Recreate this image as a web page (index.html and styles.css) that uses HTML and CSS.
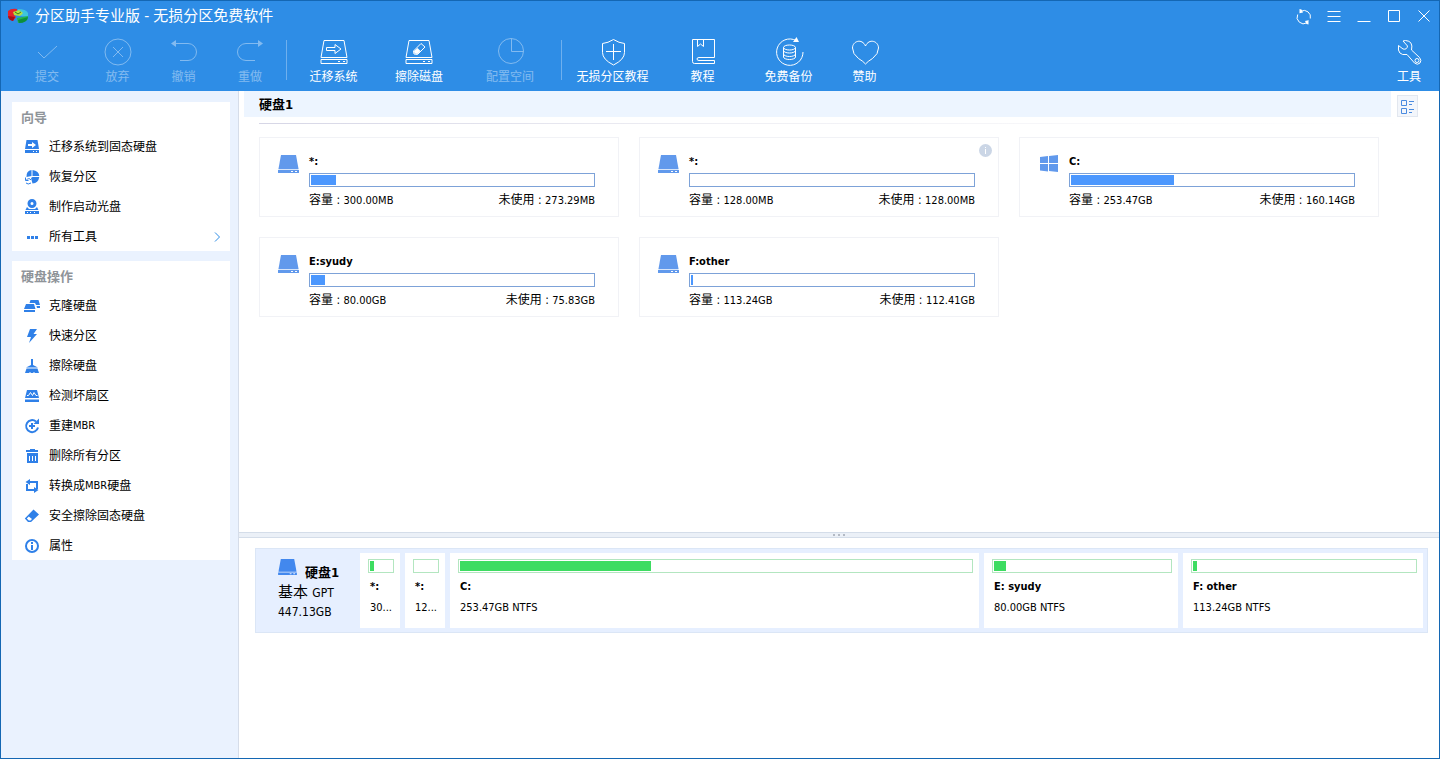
FILE: index.html
```html
<!DOCTYPE html>
<html lang="zh-CN">
<head>
<meta charset="utf-8">
<title>分区助手专业版 - 无损分区免费软件</title>
<link rel="stylesheet" href="styles.css">
</head>
<body>
<svg class="defs" aria-hidden="true">
  <symbol id="drive" viewBox="0 0 21 19">
    <path d="M3 0h15l2.600 14.200H.4z"/><path fill-rule="evenodd" d="M0 15h21v3H0zM13 16v1h2v-1zM17 16v1h2v-1z"/>
  </symbol>
</svg>
<div class="window">
  <header class="top">
    <div class="titlebar">
      <svg class="logo" width="22" height="18" viewBox="0 0 22 18">
        <path d="M1 4q3-3 9-2v4l-3 2 2 2-3 4Q0 13 1 4z" fill="#e4232b"/>
        <path d="M1 9l7 1-2 4Q1 13 1 9z" fill="#a90d18"/>
        <path d="M11 2q8 0 10 4v4l-7-1-3-4z" fill="#3fc4dc"/>
        <path d="M10 11l11-2q1 6-10 7z" fill="#21b64c"/>
        <path d="M11 13l10-3q-1 6-9 6z" fill="#0c8f3c"/>
        <path d="M6 5l6-2 4 3-3 3-6-1z" fill="#b8df3e"/><path d="M8 5l3 2 3-2" fill="none" stroke="#397b22"/>
      </svg>
      <h1 class="title">分区助手专业版 - 无损分区免费软件</h1>
      <div class="winbtns">
        <button class="winbtn" aria-label="刷新"><svg width="16" height="16" viewBox="0 0 16 16"><path d="M5 3.200A6.500 6.500 0 0 1 14.300 10.500M1.700 6.500A6.500 6.500 0 0 0 11 14.800"/><path class="solid" d="M3.500 1v4.500H2.500L7 4.500 5.500 1.500zM12.500 16.500V12H13.500L9 13l1.500 3z"/></svg></button>
        <button class="winbtn" aria-label="菜单"><svg width="16" height="16" viewBox="0 0 16 16"><path d="M1.500 3.500h13M1.500 8.500h13M1.500 13.500h13"/></svg></button>
        <button class="winbtn" aria-label="最小化"><svg width="16" height="16" viewBox="0 0 16 16"><path d="M1.500 13.500h13"/></svg></button>
        <button class="winbtn" aria-label="最大化"><svg width="16" height="16" viewBox="0 0 16 16"><path d="M2.500 2.500h11v11h-11z"/></svg></button>
        <button class="winbtn" aria-label="关闭"><svg width="16" height="16" viewBox="0 0 16 16"><path d="M2.500 2.500l11 11M13.500 2.500l-11 11"/></svg></button>
      </div>
    </div>
    <nav class="toolbar">
      <div class="group group-edit">
        <button class="tool" disabled><svg width="28" height="28" viewBox="0 0 28 28"><path d="M5 14l6 6L24 8"/></svg>提交</button>
        <button class="tool" disabled><svg width="28" height="28" viewBox="0 0 28 28"><circle cx="14" cy="14" r="13"/><path d="M9 9l10 10M19 9L9 19"/></svg>放弃</button>
        <button class="tool" disabled><svg width="28" height="28" viewBox="0 0 28 28"><path d="M4 5.500h14a8.500 8.500 0 0 1 0 17H10"/><path class="solid" d="M1 5.500l5-3.500v7z"/></svg>撤销</button>
        <button class="tool" disabled><svg width="28" height="28" viewBox="0 0 28 28"><path d="M24 5.500H10a8.500 8.500 0 0 0 0 17h9"/><path class="solid" d="M27 5.500L22 2v7z"/></svg>重做</button>
      </div>
      <div class="group group-disk">
        <button class="tool"><svg width="28" height="28" viewBox="0 0 28 28"><path d="M4 2.500h20l3 17H1zM1 21.500h26v4H1zM18 23.500h2M23 23.500h2M6.500 9.500h8.500V6.500l6 4.500-6 4.500v-3H6.500z"/></svg>迁移系统</button>
        <button class="tool"><svg width="28" height="28" viewBox="0 0 28 28"><path d="M4 2.500h20l3 17H1zM1 21.500h26v4H1zM18 23.500h2M23 23.500h2M8.500 13L16 5.500l4 3.500-7.500 7.500-3.500-.500z"/><path class="solid" d="M9 13l3.500-3 3 3-3 3-3-.500z"/></svg>擦除磁盘</button>
        <button class="tool" disabled><svg width="28" height="28" viewBox="0 0 28 28"><circle cx="15" cy="13" r="12.500"/><path d="M15.500.5v13h12"/></svg>配置空间</button>
      </div>
      <div class="group group-help">
        <button class="tool"><svg width="28" height="28" viewBox="0 0 28 28"><path d="M14.500 1.500Q20 5 25.500 5.500v9q0 7-11 12.500-11-5.500-11-12.500v-9Q9 5 14.500 1.500zM14.500 6v16M7 13.500h15"/></svg>无损分区教程</button>
        <button class="tool"><svg width="28" height="28" viewBox="0 0 28 28"><path d="M3.500 1.500h22v18H10q-2 0-2 1.500t2 1.500h15.500v3H5.500q-2 0-2-2zM8.500 1.500v7l3-2.500 3 2.500v-7"/></svg>教程</button>
        <button class="tool"><svg width="28" height="28" viewBox="0 0 28 28"><path d="M21 2.500A13.200 13.200 0 1 0 28 14M8.500 9.500v9.500a6 2.500 0 0 0 12 0V9.500M8.500 12.500a6 2.500 0 0 0 12 0M8.500 16a6 2.500 0 0 0 12 0"/><ellipse cx="14.500" cy="9.500" rx="6" ry="2.500"/><path class="solid" d="M21.500-1l2.500 5-6 0z"/></svg>免费备份</button>
        <button class="tool"><svg width="28" height="28" viewBox="0 0 28 28"><path d="M14.500 8C11 0 1.500 3 1.500 10q0 6 6 10.500 5 3 7 5.500 2-2.500 7-5.500 6-4.500 6-10.500C27.500 3 18 0 14.500 8z"/></svg>赞助</button>
      </div>
      <button class="tool tool-end"><svg width="28" height="28" viewBox="0 0 28 28"><path d="M3.500 7.500Q2 18 12 16.500l7.500 8.500q3 2.500 5.500 0 2-2.500-.500-5.500l-8-7.500Q18.500 3 10.500 2.500L8 3l4.500 5Q12 12 8 11z"/><circle cx="22" cy="22.500" r="2"/></svg>工具</button>
    </nav>
  </header>

  <div class="body">
    <aside class="side">
      <section class="panel">
        <h2 class="panel-title">向导</h2>
        <button class="item"><svg width="16" height="16" viewBox="0 0 16 16"><path fill-rule="evenodd" d="M2.500 1h11L15 10H1zM4 5v2h4v2l4-3-4-3v2zM1 11h14v3H1zM9 12v1h1v-1zM12 12v1h1v-1z"/></svg>迁移系统到固态硬盘</button>
        <button class="item"><svg width="16" height="16" viewBox="0 0 16 16"><path d="M7.500 1v6L2.500 8Q2 2 7.500 1zM8.500 1Q15 2 15.300 7H8.500zM8.500 8h6.800q-1 6-6.800 6.500L7 9z"/><path d="M1.500 8.500v3h3M2 11.500Q5 8 7 11M7 14Q4 16 2 14" fill="none" stroke="#2f80e8"/></svg>恢复分区</button>
        <button class="item"><svg width="16" height="16" viewBox="0 0 16 16"><path fill-rule="evenodd" d="M8 0a4.500 4.500 0 1 1 0 9 4.500 4.500 0 0 1 0-9zM8 3a1.500 1.500 0 1 0 0 3 1.500 1.500 0 0 0 0-3zM3 8l2 2h6l2-2 1.500 3h-13zM1 12h14v3H1zM3 13v1h1v-1zM6 13v1h1v-1zM10 13v1h1v-1z"/></svg>制作启动光盘</button>
        <button class="item"><svg width="16" height="16" viewBox="0 0 16 16"><path d="M3 7h3v3H3zM7 7h3v3H7zM11 7h3v3h-3z"/></svg>所有工具<svg class="chev" width="10" height="10" viewBox="0 0 10 10"><path d="M3 .5L7.500 5 3 9.500"/></svg></button>
      </section>
      <section class="panel">
        <h2 class="panel-title">硬盘操作</h2>
        <button class="item"><svg width="16" height="16" viewBox="0 0 16 16"><path d="M6.500 2h8l1.500 5h-4l-1-2H5.500zM12.500 8H16v2h-3zM2 6h8l1.500 5H0zM0 12h11v2H0z"/></svg>克隆硬盘</button>
        <button class="item"><svg width="16" height="16" viewBox="0 0 16 16"><path d="M6 1h7L9.500 6H13L5 15l2-6H3z"/></svg>快速分区</button>
        <button class="item"><svg width="16" height="16" viewBox="0 0 16 16"><path d="M7 1h2v6l5 2.500H2L7 7zM2.500 10.500h11L15 15h-4l-1-1-1 1H7l-1-1-1 1H1z"/></svg>擦除硬盘</button>
        <button class="item"><svg width="16" height="16" viewBox="0 0 16 16"><path d="M3 2h10l2 8H1zM1 11.500h14v2.500H1z"/><path d="M3 7.500h1.500l2-3 2 3 1.500-3 2 3h1.500" fill="none" stroke="#fff"/></svg>检测坏扇区</button>
        <button class="item"><svg width="16" height="16" viewBox="0 0 16 16"><path d="M12 3.500A6 6 0 1 0 14 9.500" fill="none" stroke="#2f80e8" stroke-width="2"/><path d="M15 .5V6H9.500zM7 5h2v2h2v2H9v2H7V9H5V7h2z"/></svg>重建<span class="latin">MBR</span></button>
        <button class="item"><svg width="16" height="16" viewBox="0 0 16 16"><path fill-rule="evenodd" d="M6 1h5v1h3v2H2V2h4zM3 5h11v10H3zM5 8v5h1V8zM8 8v5h1V8zM11 8v5h1V8z"/></svg>删除所有分区</button>
        <button class="item"><svg width="16" height="16" viewBox="0 0 16 16"><path d="M5 4h8v7M3 6v6h8" fill="none" stroke="#2f80e8" stroke-width="2"/><path d="M6 1v6L1.500 4zM10 9v6l4.500-3z"/></svg>转换成<span class="latin">MBR</span>硬盘</button>
        <button class="item"><svg width="16" height="16" viewBox="0 0 16 16"><path fill-rule="evenodd" d="M9.500 1.500l5.500 5-8 7.500H4L.8 10.500zM4.800 8.500L2.800 10.500l2 2h1.700L8 11z"/></svg>安全擦除固态硬盘</button>
        <button class="item"><svg width="16" height="16" viewBox="0 0 16 16"><circle cx="8" cy="8" r="6" fill="none" stroke="#2f80e8" stroke-width="2"/><path d="M7 4h2v2H7zM7 7h2v5H7z"/></svg>属性</button>
      </section>
    </aside>

    <main class="main">
      <section class="upper">
        <div class="heading">
          <h2 class="disk-title">硬盘1</h2>
          <button class="view" aria-label="切换视图"><svg width="15" height="15" viewBox="0 0 15 15"><path d="M1.500 1.500h5v5h-5zM1.500 9.500h5v5h-5zM9 2.500h5M9 5.500h3M9 10.500h5M9 13.500h3"/></svg></button>
        </div>
        <div class="cards">
          <article class="card"><svg class="card-icon" width="21" height="19"><use href="#drive"/></svg><div class="card-main"><h3 class="name">*:</h3><div class="bar"><i style="width:9%"></i></div><p class="facts"><span>容量 : <b>300.00MB</b></span><span>未使用 : <b>273.29MB</b></span></p></div></article>
          <article class="card"><svg class="card-icon" width="21" height="19"><use href="#drive"/></svg><div class="card-main"><h3 class="name">*:</h3><div class="bar"></div><p class="facts"><span>容量 : <b>128.00MB</b></span><span>未使用 : <b>128.00MB</b></span></p></div><span class="info"><svg width="13" height="13" viewBox="0 0 13 13"><circle cx="6.500" cy="6.500" r="6.500" fill="#cbd6e6"/><path d="M6 3h1v1H6zM6 5h1v5H6z" fill="#fff"/></svg></span></article>
          <article class="card"><svg class="card-icon" width="21" height="19" viewBox="0 0 21 19"><path d="M2 2l8-1v7H2zM11 .9L20 0v8h-9zM2 9h8v7.500l-8-1zM11 9h9v8l-9-1z"/></svg><div class="card-main"><h3 class="name">C:</h3><div class="bar"><i style="width:36.600%"></i></div><p class="facts"><span>容量 : <b>253.47GB</b></span><span>未使用 : <b>160.14GB</b></span></p></div></article>
          <article class="card"><svg class="card-icon" width="21" height="19"><use href="#drive"/></svg><div class="card-main"><h3 class="name">E:syudy</h3><div class="bar"><i style="width:5%"></i></div><p class="facts"><span>容量 : <b>80.00GB</b></span><span>未使用 : <b>75.83GB</b></span></p></div></article>
          <article class="card"><svg class="card-icon" width="21" height="19"><use href="#drive"/></svg><div class="card-main"><h3 class="name">F:other</h3><div class="bar"><i style="width:.730%"></i></div><p class="facts"><span>容量 : <b>113.24GB</b></span><span>未使用 : <b>112.41GB</b></span></p></div></article>
        </div>
      </section>
      <div class="splitter"><i></i><i></i><i></i></div>
      <section class="lower">
        <div class="map">
          <div class="disk">
            <h3 class="disk-name"><svg width="19" height="17"><use href="#drive"/></svg><span>硬盘1</span></h3>
            <p class="disk-kind">基本 <span>GPT</span></p>
            <p class="disk-size">447.13GB</p>
          </div>
          <div class="seg"><div class="bar"><i style="width:18%"></i></div><h4 class="name">*:</h4><p>30...</p></div>
          <div class="seg"><div class="bar"></div><h4 class="name">*:</h4><p>12...</p></div>
          <div class="seg"><div class="bar"><i style="width:37.300%"></i></div><h4 class="name">C:</h4><p>253.47GB NTFS</p></div>
          <div class="seg"><div class="bar"><i style="width:6.800%"></i></div><h4 class="name">E: syudy</h4><p>80.00GB NTFS</p></div>
          <div class="seg"><div class="bar"><i style="width:1.800%"></i></div><h4 class="name">F: other</h4><p>113.24GB NTFS</p></div>
        </div>
      </section>
    </main>
  </div>
</div>
</body>
</html>
```

FILE: styles.css
```css
* { box-sizing: border-box; }
body, h1, h2, h3, h4, p { margin: 0; }
body {
  font: 12px/16px "DejaVu Sans Condensed", "Noto Sans", "Noto Sans CJK SC", sans-serif;
  color: #000;
}
button {
  border: 0;
  padding: 0;
  background: none;
  font: inherit;
  color: inherit;
}
svg { flex: none; overflow: visible; }
.defs { position: absolute; width: 0; height: 0; }
.latin { font-size: 11px; }

.window {
  display: flex;
  flex-direction: column;
  min-height: 100vh;
  border: 1px solid #1467b3;
  background: #fff;
}

/* header */
.top { background: #2e8de6; color: #fff; }
.top button svg { fill: none; stroke: #fff; }
.top .solid { fill: #fff; stroke: none; }
.titlebar {
  display: flex;
  align-items: center;
  height: 30px;
  padding: 0 7px 0 6px;
}
.title {
  flex: 1;
  margin-left: 6px;
  font: 15px/20px "Liberation Sans", "Noto Sans CJK SC", sans-serif;
}
.winbtns { display: flex; gap: 14px; }
.winbtn { width: 16px; height: 16px; }
.winbtn svg { display: block; }
.toolbar { display: flex; height: 60px; padding: 0 13px 0 11px; }
.group { display: grid; margin-right: 1px; }
.group-edit { grid-template-columns: 70px 71px 61px 72px; }
.group-disk { grid-template-columns: 91px 80px 102px; }
.group-help { grid-template-columns: 99px 81px 91px 61px; }
.group-edit, .group-disk {
  border-right: 1px solid transparent;
  background: linear-gradient(#6fb0ee, #6fb0ee) right 9px / 1px 40px no-repeat border-box;
}
.tool {
  display: flex;
  flex-direction: column;
  align-items: center;
  gap: 3px;
  padding-top: 7px;
  white-space: nowrap;
}
.tool:disabled { opacity: 0.4; }
.tool-end { margin-left: auto; padding-right: 3px; }

/* sidebar */
.body { display: flex; flex: 1; }
.side {
  flex: none;
  width: 238px;
  padding: 11px 8px 11px 11px;
  border-right: 1px solid #d6dde9;
  background: #eaf2fe;
}
.panel { background: #fff; }
.panel + .panel { margin-top: 10px; }
.panel-title {
  height: 29px;
  padding: 1px 0 0 9px;
  font-size: 13px;
  line-height: 29px;
  color: #8f9499;
}
.item {
  display: flex;
  align-items: center;
  width: 100%;
  height: 30px;
  padding: 2px 8px 0 12px;
  text-align: left;
}
.item > svg:first-child { margin-right: 9px; fill: #2f80e8; }
.item .chev { margin-left: auto; fill: none; stroke: #2e8de6; }

/* partition cards */
.main { display: flex; flex: 1; flex-direction: column; min-width: 0; }
.upper { height: 441px; padding-left: 5px; }
.heading { display: flex; gap: 6px; height: 26px; padding-right: 21px; }
.disk-title {
  flex: 1;
  padding-left: 15px;
  background: #edf5ff;
  font-size: 13px;
  line-height: 27px;
}
.view {
  display: grid;
  place-items: center;
  width: 21px;
  height: 22px;
  margin-top: 4px;
  border: 1px solid #e2e7ef;
  background: #f3f6fb;
}
.view svg { fill: none; stroke: #4a8be0; }
.cards {
  display: flex;
  flex-wrap: wrap;
  gap: 20px;
  margin: 6px 20px 0 15px;
  padding-top: 14px;
  background: linear-gradient(90deg, #d6d6e6, #efeff4 40%, #fff) top / 100% 1px no-repeat;
}
.card {
  position: relative;
  display: flex;
  gap: 10px;
  width: 360px;
  height: 80px;
  padding: 16px 23px 0 18px;
  border: 1px solid #f1f2f6;
}
.card-icon { margin-top: 1px; fill: #6199ec; }
.card-main { flex: 1; }
.name { font-size: 11px; font-weight: bold; line-height: 16px; }
.card .name { margin-bottom: 3px; }
.bar {
  height: 14px;
  padding: 1px;
  border: 1px solid #7da2d8;
  background: #fff;
}
.bar i { display: block; height: 10px; background: #4b97fe; }
.facts {
  display: flex;
  justify-content: space-between;
  margin-top: 5px;
}
.facts b { font-size: 11px; font-weight: normal; }
.info { position: absolute; top: 6px; right: 6px; display: flex; }

/* divider between the two panes */
.splitter {
  display: flex;
  justify-content: center;
  gap: 3px;
  height: 6px;
  padding-top: 1px;
  border: solid #d4dde9;
  border-width: 1px 0;
  background: #ebf0f7;
}
.splitter i { width: 2px; height: 2px; background: #b4bac4; }

/* disk map */
.lower { padding: 10px 11px 10px 16px; }
.map {
  display: grid;
  grid-template-columns: 99px 40px 40px 529fr 194fr 240fr;
  column-gap: 5px;
  padding: 4px 4px 4px 0;
  border: 1px solid #dbe6f6;
  background: #e6efff;
}
.disk { padding: 6px 0 0 22px; }
.disk-name {
  display: flex;
  gap: 8px;
  height: 23px;
  font-size: 13px;
  line-height: 28px;
}
.disk-name svg { fill: #4288ee; }
.disk-kind { font-size: 15px; line-height: 20px; }
.disk-kind span { font-size: 12px; }
.disk-size { line-height: 18px; }
.seg {
  min-width: 0;
  height: 75px;
  padding: 6px 6px 0 8px;
  background: #fff;
}
.seg .bar { border-color: #b3e6c0; }
.seg .bar i { background: #3ddc61; }
.seg .name, .seg p { margin-left: 2px; }
.seg .name { margin-top: 6px; }
.seg p { margin-top: 5px; font-size: 11px; white-space: nowrap; }
```
